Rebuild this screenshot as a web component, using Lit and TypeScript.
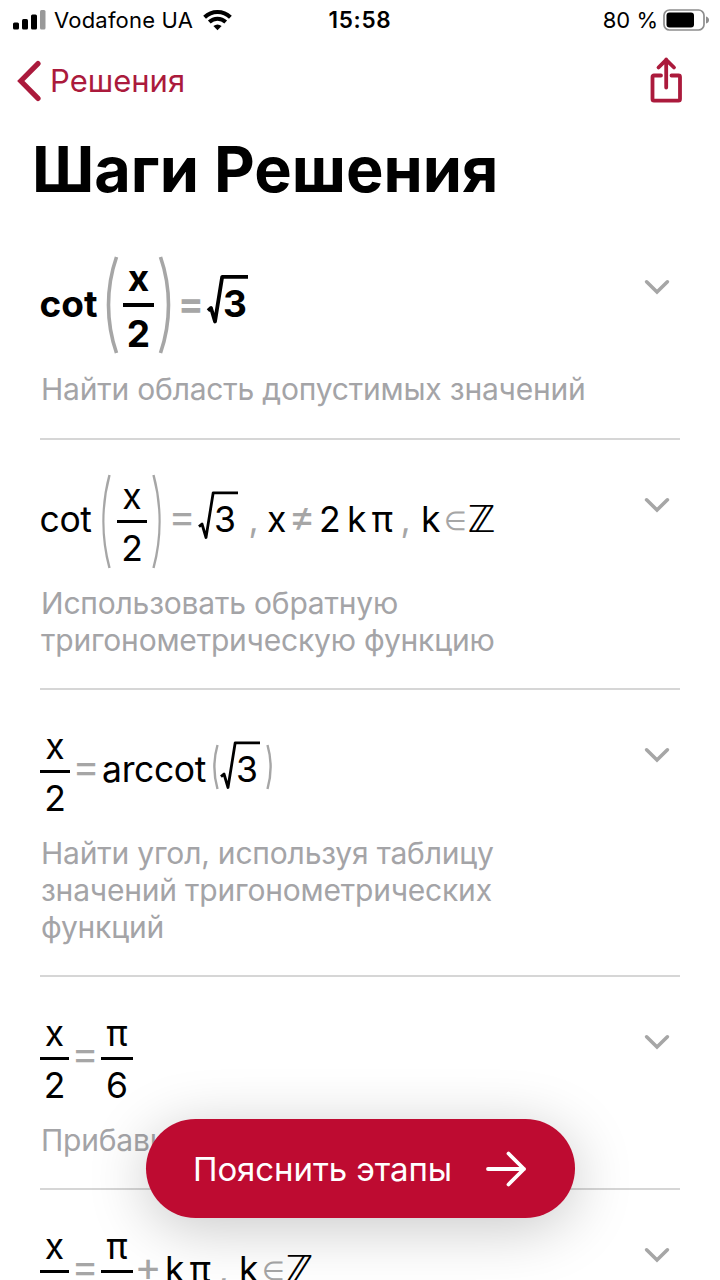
import { LitElement, html, css, svg, nothing } from "lit";
import type { TemplateResult } from "lit";
import { customElement, property } from "lit/decorators.js";
import { classMap } from "lit/directives/class-map.js";
import { styleMap } from "lit/directives/style-map.js";

type Token = {
  kind: "text" | "op" | "comma" | "set" | "frac" | "open" | "close" | "root" | "member";
  /** space before the token */
  gap: number;
  /** width of the token */
  width: number;
  value?: string;
  den?: string;
  small?: boolean;
};

type Step = { formula: Token[]; hint: string[]; bold?: boolean };

const STEPS: Step[] = [
  {
    bold: true,
    formula: [
      { kind: "text", value: "cot", gap: 0, width: 57 },
      { kind: "open", gap: 10, width: 11 },
      { kind: "frac", value: "x", den: "2", gap: 5, width: 31 },
      { kind: "close", gap: 5, width: 11 },
      { kind: "op", value: "=", gap: 11, width: 20 },
      { kind: "root", value: "3", gap: 6, width: 41 },
    ],
    hint: ["Найти область допустимых значений"],
  },
  {
    formula: [
      { kind: "text", value: "cot", gap: 0, width: 51 },
      { kind: "open", gap: 11, width: 9 },
      { kind: "frac", value: "x", den: "2", gap: 6, width: 30 },
      { kind: "close", gap: 5, width: 9 },
      { kind: "op", value: "=", gap: 12, width: 18 },
      { kind: "root", value: "3", gap: 7, width: 40 },
      { kind: "comma", value: ",", gap: 12, width: 7 },
      { kind: "text", value: "x", gap: 11, width: 17 },
      { kind: "op", value: "≠", gap: 8, width: 18 },
      { kind: "text", value: "2", gap: 9, width: 19 },
      { kind: "text", value: "k", gap: 9, width: 17 },
      { kind: "text", value: "π", gap: 6, width: 22 },
      { kind: "comma", value: ",", gap: 9, width: 7 },
      { kind: "text", value: "k", gap: 13, width: 17 },
      { kind: "member", value: "∈", gap: 7, width: 19 },
      { kind: "set", value: "ℤ", gap: 5, width: 23 },
    ],
    hint: ["Использовать обратную", "тригонометрическую функцию"],
  },
  {
    formula: [
      { kind: "frac", value: "x", den: "2", gap: 0, width: 30 },
      { kind: "op", value: "=", gap: 7, width: 18 },
      { kind: "text", value: "arccot", gap: 8, width: 102 },
      { kind: "open", gap: 8, width: 6, small: true },
      { kind: "root", value: "3", gap: 1, width: 40 },
      { kind: "close", gap: 6, width: 6, small: true },
    ],
    hint: ["Найти угол, используя таблицу", "значений тригонометрических", "функций"],
  },
  {
    formula: [
      { kind: "frac", value: "x", den: "2", gap: 0, width: 29 },
      { kind: "op", value: "=", gap: 7, width: 18 },
      { kind: "frac", value: "π", den: "6", gap: 7, width: 32 },
    ],
    hint: ["Прибавить"],
  },
  {
    formula: [
      { kind: "frac", value: "x", den: "2", gap: 0, width: 29 },
      { kind: "op", value: "=", gap: 7, width: 18 },
      { kind: "frac", value: "π", den: "6", gap: 7, width: 32 },
      { kind: "op", value: "+", gap: 6, width: 18 },
      { kind: "text", value: "k", gap: 9, width: 17 },
      { kind: "text", value: "π", gap: 6, width: 22 },
      { kind: "comma", value: ",", gap: 9, width: 7 },
      { kind: "text", value: "k", gap: 13, width: 17 },
      { kind: "member", value: "∈", gap: 7, width: 19 },
      { kind: "set", value: "ℤ", gap: 5, width: 23 },
    ],
    hint: [],
  },
];

@customElement("math-formula")
export class MathFormula extends LitElement {
  @property({ attribute: false }) tokens: Token[] = [];
  @property({ type: Boolean }) bold = false;

  static styles = css`
    :host { display: block; }
    .row { display: flex; align-items: center; height: 120px; font-size: 35.5px; line-height: 44px; color: #000; }
    .row.bold { font-size: 37px; font-weight: 700; }
    .token { display: flex; flex: none; justify-content: center; white-space: nowrap; }
    .text { padding-bottom: 2px; letter-spacing: -0.4px; }
    .bold .text { padding-bottom: 3px; letter-spacing: 0; }
    .op { color: #a6a6a6; font-size: 41px; font-weight: 400; padding-bottom: 10px; }
    .bold .op { font-size: 38px; font-weight: 700; padding-bottom: 5px; }
    .comma { color: #a6a6a6; padding-bottom: 2px; font-weight: 400; }
    .member { color: #a6a6a6; font: 200 26px/44px "DejaVu Sans", sans-serif; }
    .set { font: 400 37px/44px "DejaVu Sans", sans-serif; padding-bottom: 3px; }
    .frac { flex-direction: column; align-items: center; line-height: 51px; }
    .num { line-height: 46px; margin-top: 5px; }
    .bold .frac { line-height: 54px; }
    .bold .num { line-height: 51px; margin-top: 3px; }
    .bar { align-self: stretch; height: 3px; background: #000; }
    .bold .bar { height: 4px; }
    .root { display: grid; align-items: center; }
    .root > * { grid-area: 1 / 1; }
    .radicand { justify-self: end; padding: 0 2px 3px 0; }
    .bold .radicand { padding: 0 1px 3px 0; }
    svg { display: block; fill: none; stroke: #000; stroke-width: 2.8; overflow: visible; }
    .paren svg { stroke: #a6a6a6; stroke-width: 2.4; }
    .bold svg { stroke-width: 3.8; }
    .bold .paren svg { stroke-width: 3.6; }
    .small { padding-bottom: 9px; }
  `;

  private paren(t: Token) {
    const h = t.small ? 44 : this.bold ? 96 : 93;
    const w = t.width;
    const far = t.kind === "open" ? w - 1.5 : 1.5;
    const near = t.kind === "open" ? 1.5 : w - 1.5;
    const c = (8 * near - 2 * far) / 6;
    return html`<svg width=${w} height=${h} viewBox="0 0 ${w} ${h}">
      ${svg`<path d="M${far} 0C${c} ${h * 0.32} ${c} ${h * 0.68} ${far} ${h}"></path>`}
    </svg>`;
  }

  private body(t: Token): TemplateResult {
    switch (t.kind) {
      case "open":
      case "close":
        return this.paren(t);
      case "frac":
        return html`<span class="num">${t.value}</span><span class="bar"></span><span>${t.den}</span>`;
      case "root":
        return html`<svg width=${t.width} height="60" viewBox="0 0 ${t.width} 60">
            <path d="M1 35.6L4 33L8 46.5L15.2 1.8H${t.width}" stroke-linejoin="round"></path>
          </svg>
          <span class="radicand">${t.value}</span>`;
      default:
        return html`${t.value}`;
    }
  }

  render() {
    return html`<div class=${classMap({ row: true, bold: this.bold })}>
      ${this.tokens.map(
        (t) => html`<span
          class=${classMap({
            token: true,
            [t.kind]: true,
            paren: t.kind === "open" || t.kind === "close",
            small: !!t.small,
          })}
          style=${styleMap({ width: `${t.width}px`, marginLeft: `${t.gap}px` })}
          >${this.body(t)}</span
        >`
      )}
    </div>`;
  }
}

@customElement("solution-step")
export class SolutionStep extends LitElement {
  @property({ attribute: false }) step!: Step;

  static styles = css`
    :host { display: block; padding: 0 40px; }
    .step { display: grid; grid-template-columns: 1fr 46px; border-bottom: 2px solid #d6d6d6; padding-top: 21px; }
    .first { padding-top: 23px; }
    .chevron { justify-self: center; margin-top: 36px; }
    .first .chevron { margin-top: 34px; }
    .hint { padding: 4px 0 29.7px 1px; font-size: 30px; line-height: 36.7px; letter-spacing: -0.2px; color: #a4a4a7; white-space: nowrap; }
    .first .hint { padding-top: 6px; padding-bottom: 30.5px; }
    .line { display: block; }
  `;

  render() {
    const { formula, hint, bold } = this.step;
    return html`<div class=${classMap({ step: true, first: !!bold })}>
      <div>
        <math-formula .tokens=${formula} ?bold=${!!bold}></math-formula>
        ${hint.length
          ? html`<div class="hint">${hint.map((l) => html`<span class="line">${l}</span>`)}</div>`
          : nothing}
      </div>
      <svg class="chevron" width="26" height="16" viewBox="0 0 26 16" fill="none" stroke="#a6a6a6" stroke-width="3.6" stroke-linecap="round">
        <path d="M2.6 2.8L13 13L23.4 2.8"></path>
      </svg>
    </div>`;
  }
}

@customElement("app-root")
export class AppRoot extends LitElement {
  static styles = css`
    :host { display: block; position: relative; width: 720px; height: 1280px; overflow: hidden; background: #fff; color: #000; font-family: Inter, "Liberation Sans", sans-serif; }
    .status { display: grid; grid-template-columns: 1fr auto 1fr; align-items: center; height: 40px; padding: 0 11px 0 13px; font-size: 22px; line-height: 26px; }
    .carrier { display: flex; align-items: center; }
    .carrier-name { margin: 0 10px 0 8px; letter-spacing: 0.2px; }
    .time { font-weight: 600; font-size: 22.5px; letter-spacing: 0.7px; margin-right: 2px; }
    .power { display: flex; align-items: center; justify-content: flex-end; gap: 5px; }
    .nav { display: flex; align-items: center; justify-content: space-between; height: 82px; padding: 0 37px 0 16px; color: #ab1a3c; }
    .back { display: flex; align-items: center; gap: 8px; font-size: 31px; line-height: 38px; }
    .share { margin-bottom: 3px; }
    .title { margin: 0; padding: 10px 0 0 32px; height: 90px; box-sizing: border-box; margin-bottom: 10px; font-size: 63px; line-height: 74px; font-weight: 700; white-space: nowrap; }
    .explain { position: absolute; left: 146px; top: 1119px; display: flex; align-items: center; justify-content: space-between; width: 429px; height: 99px; padding: 0 49px 0 47px; box-sizing: border-box; border: 0; border-radius: 50px; background: #be0b31; color: #fff; font: 400 33px/40px Inter, sans-serif; letter-spacing: -0.1px; white-space: nowrap; box-shadow: 0 10px 60px rgba(0, 0, 0, 0.22); }
  `;

  render() {
    return html`
      <header class="status">
        <div class="carrier">
          <svg width="33" height="20" viewBox="0 0 33 20">
            <rect x="0" y="12.5" width="6" height="7" rx="1.5"></rect>
            <rect x="9" y="9" width="6" height="10.5" rx="1.5"></rect>
            <rect x="18" y="4.5" width="6" height="15" rx="1.5"></rect>
            <rect x="27" y="0" width="5.5" height="19.5" rx="1.5" fill="#999"></rect>
          </svg>
          <span class="carrier-name">Vodafone UA</span>
          <svg width="29" height="22" viewBox="0 0 29 22" fill="none" stroke="#000" stroke-width="4">
            <path d="M1.6 8.2A18.5 18.5 0 0 1 27.4 8.2"></path>
            <path d="M6.3 13A12 12 0 0 1 22.7 13"></path>
            <path d="M14.5 21.2L10.4 17Q14.5 13.8 18.6 17Z" fill="#000" stroke="none"></path>
          </svg>
        </div>
        <span class="time">15:58</span>
        <div class="power">
          <span>80 %</span>
          <svg width="46" height="22" viewBox="0 0 46 22">
            <rect x="1" y="1" width="40" height="20" rx="5.5" fill="none" stroke="#8d8d8d" stroke-width="1.7"></rect>
            <rect x="3.5" y="3.5" width="27.5" height="15" rx="3"></rect>
            <path d="M43 7.5Q46 8.5 46 11Q46 13.5 43 14.5Z" fill="#8d8d8d"></path>
          </svg>
        </div>
      </header>
      <nav class="nav">
        <div class="back">
          <svg width="26" height="42" viewBox="0 0 26 42" fill="none" stroke="currentColor" stroke-width="5.2" stroke-linecap="round" stroke-linejoin="miter">
            <path d="M22 3.6L4.8 21L22 38.4"></path>
          </svg>
          <span>Решения</span>
        </div>
        <svg class="share" width="34" height="48" viewBox="0 0 34 48" fill="none" stroke="currentColor" stroke-width="3.8" stroke-linecap="round" stroke-linejoin="round">
          <path d="M12 19.5H5Q3.5 19.5 3.5 21V43Q3.5 44.6 5 44.6H29.5Q31 44.6 31 43V21Q31 19.5 29.5 19.5H22.5"></path>
          <path d="M17.2 31.5V3.5M9.5 11.5L17.2 3.8L25 11.5"></path>
        </svg>
      </nav>
      <h1 class="title">Шаги Решения</h1>
      <main>${STEPS.map((s) => html`<solution-step .step=${s}></solution-step>`)}</main>
      <button class="explain">
        <span>Пояснить этапы</span>
        <svg width="40" height="36" viewBox="0 0 40 36" fill="none" stroke="#fff" stroke-width="3.8" stroke-linecap="round" stroke-linejoin="round">
          <path d="M2 18H38M22.5 2.5L38 18L22.5 33.5"></path>
        </svg>
      </button>
    `;
  }
}
